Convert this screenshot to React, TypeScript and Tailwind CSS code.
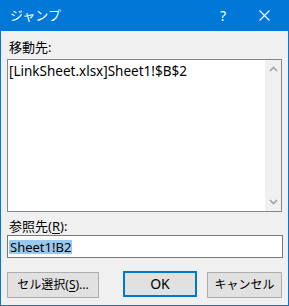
import React from "react";

const font = { fontFamily: '"Noto Sans", "Noto Sans CJK JP", sans-serif' };

const Chevron: React.FC<{ up?: boolean }> = ({ up }) => (
  <svg width="9" height="6" viewBox="0 0 9 6" className={up ? "" : "rotate-180"}>
    <path d="M1 5 L4.5 1.5 L8 5" fill="none" stroke="#a3a3a3" strokeWidth="1.6" />
  </svg>
);

const App: React.FC = () => {
  return (
    <div
      className="w-[289px] h-[306px] bg-[#f0f0f0] border-x border-b border-[#0078d7] flex flex-col text-black"
      style={font}
    >
      {/* title bar */}
      <div className="h-[31px] -mx-px bg-[#0078d7] flex items-center text-white shrink-0">
        <span className="pl-[10px] text-[13px] leading-none">ジャンプ</span>
        <span className="ml-auto text-[14px] leading-none mr-[33px]">?</span>
        <svg width="11" height="11" viewBox="0 0 11 11" className="mr-[19px]">
          <path d="M0.5 0.5 L10.5 10.5 M10.5 0.5 L0.5 10.5" stroke="#fff" strokeWidth="1.1" />
        </svg>
      </div>

      <div className="flex flex-col px-[6px]">
        <div className="pl-[2px] pt-[7px] h-[28px] text-[13px] leading-[18px]">移動先:</div>

        {/* list */}
        <div className="w-[275px] h-[153px] border border-[#828790] bg-white flex">
          <div className="flex-1 pl-[1px] pt-[1px] text-[13.5px] leading-[20px]">
            [LinkSheet.xlsx]Sheet1!$B$2
          </div>
          <div className="w-[16px] bg-[#f0f0f0] flex flex-col items-center justify-between pt-[6px] pb-[6px]">
            <Chevron up />
            <Chevron />
          </div>
        </div>

        <div className="pl-[2px] pt-[5px] h-[23px] text-[13px] leading-[18px]">
          参照先(<span className="underline underline-offset-2">R</span>):
        </div>

        {/* input */}
        <div className="w-[276px] h-[23px] border border-[#7a7a7a] bg-white flex items-center pl-[1px]">
          <span className="bg-[#99c9ef] px-[1px] text-[13px] leading-[14px] h-[14px] flex items-center">
            Sheet1!B2
          </span>
        </div>

        {/* buttons */}
        <div className="flex mt-[13px] items-start">
          <button className="w-[92px] h-[26px] mt-[1px] bg-[#e1e1e1] border border-[#adadad] text-[12px] leading-none">
            セル選択(<span className="underline underline-offset-2">S</span>)...
          </button>
          <button className="ml-[24px] w-[74px] h-[26px] bg-[#e1e1e1] border-2 border-[#0078d7] text-[14px] leading-none">
            OK
          </button>
          <button className="ml-[10px] w-[75px] h-[26px] mt-[1px] bg-[#e1e1e1] border border-[#adadad] text-[12px] leading-none">
            キャンセル
          </button>
        </div>
      </div>
    </div>
  );
};

export default App;
